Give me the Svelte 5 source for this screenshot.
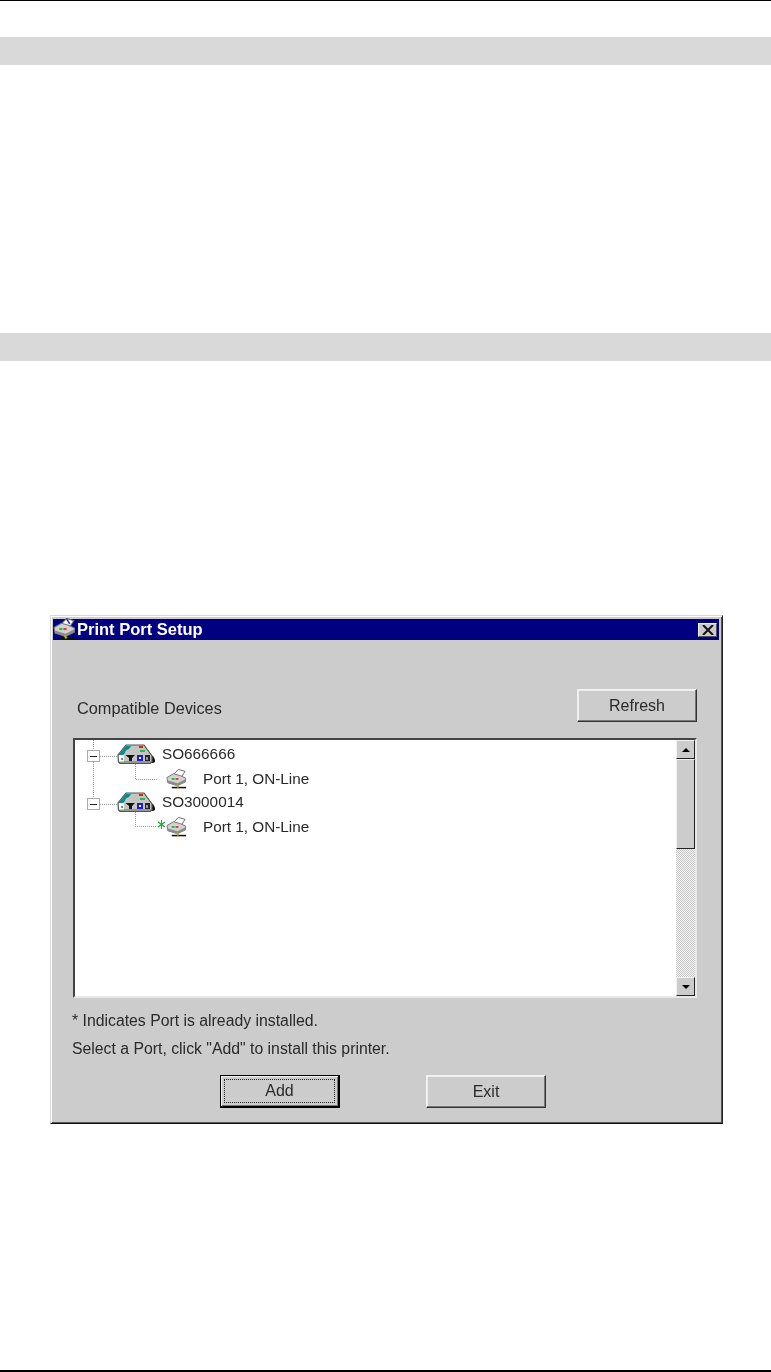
<script>
    const tree = [
        { name: 'SO666666', port: 'Port 1, ON-Line', installed: false },
        { name: 'SO3000014', port: 'Port 1, ON-Line', installed: true }
    ];
</script>

{#snippet printer(size, pen)}
    <svg class="printer" width={size} height={size} viewBox="0 0 22 21">
        <path d="M8 6 L13 1 L20 3 L16 9 Z" fill="#fff" stroke="#666" stroke-width="1" />
        {#if pen}
            <path d="M13 1 L16 6" stroke="#2030c0" stroke-width="1.5" />
        {/if}
        <path d="M1 9.500 L8 5.500 L15 7.500 L20.500 10 V14 L12 18 L2 15 Z" fill="#d2d2d2" stroke="#777" stroke-width="1" />
        <path d="M2 12.500 L12 15.500 L20 11.500 V14 L12 18 L2 15 Z" fill="#8a8a8a" />
        <rect x="6" y="10" width="3" height="2" fill="#2db84a" />
        <rect x="10" y="10" width="3" height="2" fill="#e0403a" />
        <path d="M6 20 H21" stroke="#111" stroke-width="1.6" />
        <path d="M11 17 L13 20" stroke="#b7b400" stroke-width="2" />
    </svg>
{/snippet}

{#snippet device()}
    <svg class="device" width="38" height="20" viewBox="0 0 38 20">
        <path d="M34 12 H36 L38 15.500 V18 L36 19 H33 Z" fill="#111" />
        <path d="M1.500 18 L1 11 L9 1 H27 L35 12 V18 L33 19.500 H3 Z" fill="#c4c6c4" stroke="#555" stroke-width="1.200" />
        <path d="M2 18.500 H34 V17.500 H2 Z" fill="#666" />
        <path d="M2 10.500 L9 2 H14 L12 5 L9 6.500 L7.500 9.500 L6 11 H2 Z" fill="#0b8b8b" />
        <rect x="2" y="11" width="5" height="6.500" fill="#fff" />
        <rect x="4" y="14" width="2" height="2" fill="#2db84a" />
        <path d="M8.500 11 H18 L15 14 V17 H12 V14 Z" fill="#111" />
        <rect x="20" y="11" width="6" height="6" fill="#1a1ad0" />
        <rect x="22" y="13" width="2" height="2" fill="#fff" />
        <rect x="28" y="11" width="5" height="6" fill="#222" />
        <rect x="29" y="13" width="2" height="3" fill="#999" />
        <rect x="22" y="2" width="4" height="2" fill="#e0201a" />
        <rect x="23" y="6" width="5" height="2" fill="#2db84a" />
    </svg>
{/snippet}

<div class="page">
    <div class="rule-top"></div>
    <div class="band first"></div>
    <div class="band second"></div>

    <div class="window">
        <div class="titlebar">
            {@render printer(23, true)}
            <span class="title">Print Port Setup</span>
            <button class="close" aria-label="Close">
                <svg width="12" height="10" viewBox="0 0 12 10">
                    <path d="M1 0 L11 10 M11 0 L1 10" stroke="#111" stroke-width="2" />
                </svg>
            </button>
        </div>

        <div class="content">
            <div class="head">
                <span class="label">Compatible Devices</span>
                <button class="btn refresh">Refresh</button>
            </div>

            <div class="list">
                <div class="tree">
                    <svg class="lines" width="90" height="100" viewBox="0 0 90 100">
                        <path d="M18.500 0 V10 M18.500 22 V58 M25 16.500 H42 M25 64.500 H42 M60.500 24 V39.500 H83 M60.500 72 V86.500 H82" fill="none" stroke="#999" stroke-dasharray="1 1" />
                    </svg>
                    {#each tree as node}
                        <div class="row node">
                            <span class="expander"><span class="minus"></span></span>
                            {@render device()}
                            <span class="name">{node.name}</span>
                        </div>
                        <div class="row port">
                            {#if node.installed}
                                <svg class="star" width="7" height="9" viewBox="0 0 7 9">
                                    <path d="M3.500 0 V9 M0 2 L7 7 M7 2 L0 7" stroke="#1faa3a" stroke-width="1.200" />
                                </svg>
                            {/if}
                            {@render printer(21, false)}
                            <span class="name">{node.port}</span>
                        </div>
                    {/each}
                </div>
                <div class="scrollbar">
                    <div class="sb-btn"><span class="arrow up"></span></div>
                    <div class="thumb"></div>
                    <div class="track"></div>
                    <div class="sb-btn"><span class="arrow down"></span></div>
                </div>
            </div>

            <p class="note">* Indicates Port is already installed.</p>
            <p class="note">Select a Port, click "Add" to install this printer.</p>

            <div class="actions">
                <button class="btn default"><span class="focus">Add</span></button>
                <button class="btn">Exit</button>
            </div>
        </div>
    </div>

    <div class="rule-bottom"></div>
</div>

<style>
    :global(body) {
        background: #fff;
    }

    .page {
        display: flex;
        flex-direction: column;
        height: 1372px;
        font-family: "Liberation Sans", Arial, sans-serif;
        overflow: hidden;
    }

    .rule-top {
        height: 1px;
        background: #000;
    }

    .rule-bottom {
        height: 2px;
        margin-top: auto;
        background: #000;
    }

    .band {
        height: 28px;
        background: #d9d9d9;
    }

    .first {
        margin-top: 36px;
    }

    .second {
        margin-top: 268px;
    }

    /* the source is an upscaled scan, hence the slight softening */
    .window {
        box-sizing: border-box;
        width: 673px;
        height: 509px;
        margin: 254px 0 0 50px;
        padding: 3px 2px 0 2px;
        background: #ccc;
        border: 1px solid;
        border-color: #d8d8d8 #222 #111 #d8d8d8;
        box-shadow: inset 1px 1px 0 #fff, inset -1px -1px 0 #555;
        filter: blur(0.35px);
    }

    .titlebar {
        display: flex;
        align-items: center;
        height: 21px;
        margin-right: 1px;
        background: #000080;
        color: #fff;
    }

    .title {
        margin-left: 1px;
        font-size: 16.5px;
        font-weight: bold;
    }

    .titlebar .printer {
        flex: none;
        margin-top: -2px;
    }

    .close {
        display: flex;
        align-items: center;
        justify-content: center;
        width: 19px;
        height: 14px;
        margin-left: auto;
        margin-right: 2px;
        padding: 0;
        background: #ccc;
        border: 1px solid;
        border-color: #f2f2f2 #555 #555 #f2f2f2;
    }

    .content {
        padding: 49px 0 0 20px;
        color: #2a2a2a;
        font-size: 15.8px;
    }

    .head {
        display: flex;
        justify-content: space-between;
        align-items: flex-end;
        width: 624px;
    }

    .label {
        margin: 0 0 4px 4px;
        font-size: 16.3px;
    }

    .btn {
        box-sizing: border-box;
        width: 120px;
        height: 33px;
        padding: 0;
        background: #ccc;
        border: 1px solid;
        border-color: #f2f2f2 #333 #333 #f2f2f2;
        box-shadow: inset -1px -1px 0 #777, inset 1px 1px 0 #eee;
        color: #2a2a2a;
        font: inherit;
        font-size: 16px;
    }

    .list {
        box-sizing: border-box;
        display: flex;
        justify-content: space-between;
        width: 624px;
        height: 260px;
        margin-top: 16px;
        background: #fff;
        border: 2px solid;
        border-color: #444 #e8e8e8 #e8e8e8 #444;
    }

    .tree {
        position: relative;
        padding-top: 2px;
        flex: 1;
        font-size: 15.3px;
    }

    .lines {
        position: absolute;
        top: 0;
        left: 0;
    }

    .row {
        display: flex;
        align-items: center;
        height: 24px;
        position: relative;
    }

    .node {
        padding-left: 12px;
    }

    .port {
        padding-left: 91px;
    }

    .expander {
        box-sizing: border-box;
        display: flex;
        align-items: center;
        justify-content: center;
        width: 13px;
        height: 12px;
        margin: 4px 17px 0 0;
        border: 1px solid #aaa;
        background: #fff;
    }

    .minus {
        width: 7px;
        height: 1px;
        background: #222;
    }

    .device {
        flex: none;
    }

    .node .name {
        margin-left: 7px;
    }

    .port .name {
        margin: 2px 0 0 16px;
    }

    .star {
        position: absolute;
        left: 83px;
        top: 6px;
    }

    .scrollbar {
        display: flex;
        flex-direction: column;
        width: 19px;
    }

    .sb-btn {
        box-sizing: border-box;
        display: flex;
        align-items: center;
        justify-content: center;
        height: 19px;
        background: #ccc;
        border: 1px solid;
        border-color: #f2f2f2 #222 #222 #f2f2f2;
    }

    .arrow {
        width: 0;
        height: 0;
        border-left: 4px solid transparent;
        border-right: 4px solid transparent;
    }

    .up {
        border-bottom: 4px solid #000;
    }

    .down {
        border-top: 4px solid #000;
    }

    .thumb {
        box-sizing: border-box;
        height: 90px;
        background: #ccc;
        border: 1px solid;
        border-color: #f2f2f2 #222 #222 #f2f2f2;
    }

    .track {
        flex: 1;
        background: repeating-conic-gradient(#c8c8c8 0 25%, #f4f4f4 0 50%) 0 0 / 2px 2px;
    }

    .note {
        height: 28px;
        margin: 0 0 0 -1px;
        line-height: 28px;
    }

    .list + .note {
        margin-top: 9px;
    }

    .actions {
        display: flex;
        gap: 86px;
        margin: 12px 0 0 147px;
    }

    .default {
        border: 1px solid #000;
        border-right-width: 2px;
        border-bottom-width: 2px;
        box-shadow: inset 1px 1px 0 #f2f2f2, inset -1px -1px 0 #777;
        padding: 3px;
    }

    .focus {
        box-sizing: border-box;
        display: flex;
        align-items: center;
        justify-content: center;
        height: 100%;
        border: 1px dotted #222;
    }
</style>
